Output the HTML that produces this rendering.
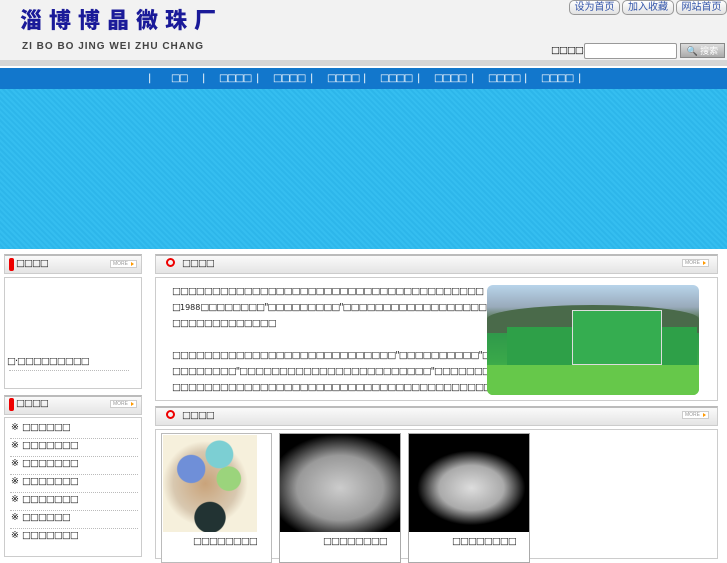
<!DOCTYPE html>
<html><head><meta charset="utf-8"><style>
*{margin:0;padding:0;box-sizing:border-box}
body{width:727px;height:545px;overflow:hidden;background:#fff;font-family:"Liberation Sans","DejaVu Sans",sans-serif;position:relative}
.a{position:absolute}
.t{font-family:"DejaVu Sans",sans-serif;font-size:9.5px;letter-spacing:-1px;color:#222;white-space:nowrap;line-height:16px}
.btn{position:absolute;top:0;height:15px;border:1px solid #999;border-radius:5px;background:linear-gradient(#fff,#e2e2e2);font-size:10px;color:#3355aa;text-align:center;line-height:13px;font-family:"Liberation Sans","Noto Sans CJK SC",sans-serif}
.hd{position:absolute;height:20px;border:1px solid #ccc;border-top:2px solid #bbb;background:linear-gradient(#fafafa,#e4e4e4)}
.box{position:absolute;border:1px solid #ccc;background:#fff}
.more{position:absolute;width:27px;height:8px;border:1px solid #ccc;background:#fff;font-size:5px;color:#999;line-height:6px;padding-left:2px}
.more:after{content:"";position:absolute;right:2px;top:1px;border-left:3px solid #f90;border-top:2px solid transparent;border-bottom:2px solid transparent}
.ring{position:absolute;width:9px;height:9px;border:2px solid #e00;border-radius:50%}
.pill{position:absolute;width:5px;height:13px;background:#e00;border-radius:2px}
.dot{position:absolute;border-bottom:1px dotted #bbb}
.nav{position:absolute;top:73px;font-size:10px;letter-spacing:-1.5px;color:#fff;font-family:"DejaVu Sans",sans-serif}
</style></head><body>
<div class="a" style="left:0;top:0;width:727px;height:60px;background:#f2f2f2"></div>
<div class="a" style="left:0;top:60px;width:727px;height:7px;background:#d6d6d6;border-bottom:1px solid #fff"></div>
<div class="a" style="left:20px;top:5px;font-family:'Noto Sans CJK SC',sans-serif;font-weight:900;font-size:22px;color:#1a1a99;letter-spacing:7px;line-height:28px">淄博博晶微珠厂</div>
<div class="a" style="left:22px;top:41px;font-weight:bold;font-size:10px;color:#444;letter-spacing:1px">ZI BO BO JING WEI ZHU CHANG</div>
<div class="btn" style="left:569px;width:51px">设为首页</div>
<div class="btn" style="left:622px;width:52px">加入收藏</div>
<div class="btn" style="left:676px;width:51px">网站首页</div>
<div class="a t" style="left:551px;top:43px;font-weight:bold;color:#000">□□□□:</div>
<div class="a" style="left:584px;top:43px;width:93px;height:16px;border:1px solid #999;border-radius:2px;background:#fff"></div>
<div class="a" style="left:680px;top:43px;width:45px;height:15px;border:1px solid #888;background:linear-gradient(#ddd,#aaa);font-size:9px;color:#fff;text-align:center;line-height:13px;font-family:'Noto Sans CJK SC',sans-serif">🔍 搜索</div>
<div class="a" style="left:0;top:68px;width:727px;height:21px;background:#1277cc"></div>
<div class="a" style="left:0;top:89px;width:727px;height:160px;background:repeating-linear-gradient(45deg,#35bef0 0,#35bef0 2px,#2db6ea 2px,#2db6ea 4px)"></div>
<div class="nav" style="left:148px">|</div><div class="nav" style="left:171px">□□</div>
<div class="nav" style="left:202px">|</div><div class="nav" style="left:219px">□□□□</div>
<div class="nav" style="left:256px">|</div><div class="nav" style="left:273px">□□□□</div>
<div class="nav" style="left:310px">|</div><div class="nav" style="left:327px">□□□□</div>
<div class="nav" style="left:363px">|</div><div class="nav" style="left:380px">□□□□</div>
<div class="nav" style="left:417px">|</div><div class="nav" style="left:434px">□□□□</div>
<div class="nav" style="left:471px">|</div><div class="nav" style="left:488px">□□□□</div>
<div class="nav" style="left:524px">|</div><div class="nav" style="left:541px">□□□□</div>
<div class="nav" style="left:578px">|</div>

<!-- left -->
<div class="hd" style="left:4px;top:254px;width:138px"></div>
<div class="pill" style="left:9px;top:258px"></div>
<div class="a t" style="left:16px;top:256px;font-weight:bold">□□□□</div>
<div class="more" style="left:110px;top:260px">MORE</div>
<div class="box" style="left:4px;top:277px;width:138px;height:112px"></div>
<div class="a t" style="left:7px;top:354px">□·□□□□□□□□□</div>
<div class="dot" style="left:9px;top:370px;width:120px"></div>
<div class="hd" style="left:4px;top:395px;width:138px"></div>
<div class="pill" style="left:9px;top:398px"></div>
<div class="a t" style="left:16px;top:396px;font-weight:bold">□□□□</div>
<div class="more" style="left:110px;top:400px">MORE</div>
<div class="box" style="left:4px;top:417px;width:138px;height:140px"></div>
<div class="a t" style="left:11px;top:420px">※ &nbsp;□□□□□□</div><div class="dot" style="left:10px;top:438px;width:128px"></div>
<div class="a t" style="left:11px;top:438px">※ &nbsp;□□□□□□□</div><div class="dot" style="left:10px;top:456px;width:128px"></div>
<div class="a t" style="left:11px;top:456px">※ &nbsp;□□□□□□□</div><div class="dot" style="left:10px;top:474px;width:128px"></div>
<div class="a t" style="left:11px;top:474px">※ &nbsp;□□□□□□□</div><div class="dot" style="left:10px;top:492px;width:128px"></div>
<div class="a t" style="left:11px;top:492px">※ &nbsp;□□□□□□□</div><div class="dot" style="left:10px;top:510px;width:128px"></div>
<div class="a t" style="left:11px;top:510px">※ &nbsp;□□□□□□</div><div class="dot" style="left:10px;top:528px;width:128px"></div>
<div class="a t" style="left:11px;top:528px">※ &nbsp;□□□□□□□</div>

<!-- right -->
<div class="hd" style="left:155px;top:254px;width:563px"></div>
<div class="ring" style="left:166px;top:258px"></div>
<div class="a t" style="left:182px;top:256px">□□□□</div>
<div class="more" style="left:682px;top:259px">MORE</div>
<div class="box" style="left:155px;top:277px;width:563px;height:124px"></div>
<div class="a t" style="left:172px;top:284px">□□□□□□□□□□□□□□□□□□□□□□□□□□□□□□□□□□□□□□□<br>□<span style="font-size:8px;letter-spacing:0;vertical-align:top">1988</span>□□□□□□□□"□□□□□□□□□"□□□□□□□□□□□□□□□□□□□□□"□□□□□□□□□"□□<br>□□□□□□□□□□□□□<br><br>□□□□□□□□□□□□□□□□□□□□□□□□□□□□"□□□□□□□□□□"□□□□□□□□□"□□□□□□□□□□□<br>□□□□□□□□"□□□□□□□□□□□□□□□□□□□□□□□□"□□□□□□□□□□□□□□□□□□□□"□□□□□□□□<br>□□□□□□□□□□□□□□□□□□□□□□□□□□□□□□□□□□□□□□□□</div>
<div class="a" style="left:487px;top:285px;width:212px;height:110px;border-radius:6px;overflow:hidden;background:linear-gradient(#b8d4ea 0,#9ab 20%,#5a7a5a 30%,#2f9a4a 45%,#3aa84a 70%,#5fc94a 100%)">
<div class="a" style="left:0;top:20px;width:212px;height:28px;background:#4a6a4a;border-radius:50% 50% 0 0"></div>
<div class="a" style="left:20px;top:42px;width:190px;height:45px;background:#2ea048"></div>
<div class="a" style="left:85px;top:25px;width:90px;height:55px;background:#35ad50;border:1px solid #ddd"></div>
<div class="a" style="left:0;top:80px;width:212px;height:30px;background:#66c84a"></div>
</div>
<div class="hd" style="left:155px;top:406px;width:563px"></div>
<div class="ring" style="left:166px;top:410px"></div>
<div class="a t" style="left:182px;top:408px">□□□□</div>
<div class="more" style="left:682px;top:411px">MORE</div>
<div class="box" style="left:155px;top:429px;width:563px;height:130px"></div>
<div class="box" style="left:161px;top:433px;width:111px;height:130px;border-color:#bbb"></div>
<div class="a" style="left:163px;top:435px;width:94px;height:97px;background:radial-gradient(circle at 30% 35%,#6f8fd8 0,#6f8fd8 15%,transparent 16%),radial-gradient(circle at 60% 20%,#7ccfd3 0,#7ccfd3 14%,transparent 15%),radial-gradient(circle at 70% 45%,#9bd47c 0,#9bd47c 14%,transparent 15%),radial-gradient(circle at 50% 85%,#233 0,#233 16%,transparent 17%),radial-gradient(circle at 45% 50%,#c9a37a 0,#d8c8b0 45%,#f6f0dc 60%)"></div>
<div class="box" style="left:279px;top:433px;width:122px;height:130px;border-color:#aaa"></div>
<div class="a" style="left:280px;top:434px;width:120px;height:98px;background:radial-gradient(ellipse 60% 55% at 50% 55%,#ccc 0,#999 60%,#000 100%)"></div>
<div class="box" style="left:408px;top:433px;width:122px;height:130px;border-color:#aaa"></div>
<div class="a" style="left:409px;top:434px;width:120px;height:98px;background:radial-gradient(ellipse 45% 38% at 52% 55%,#ddd 0,#aaa 60%,#000 100%)"></div>
<div class="a t" style="left:193px;top:534px">□□□□□□□□</div>
<div class="a t" style="left:323px;top:534px">□□□□□□□□</div>
<div class="a t" style="left:452px;top:534px">□□□□□□□□</div>
</body></html>
